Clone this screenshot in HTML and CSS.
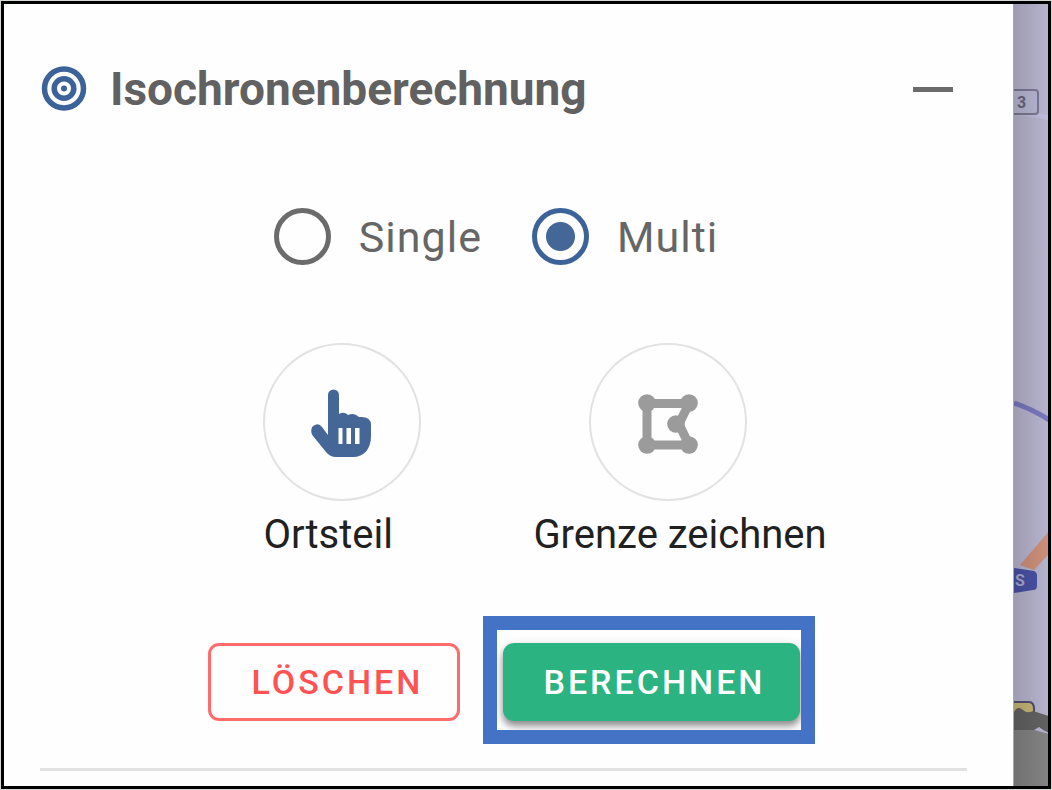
FILE: index.html
```html
<!DOCTYPE html>
<html lang="de">
<head>
<meta charset="utf-8">
<meta name="viewport" content="width=device-width, initial-scale=1">
<title>Isochronenberechnung</title>
<link rel="stylesheet" href="styles.css">
</head>
<body>
<div class="frame">
  <main class="panel">
    <header class="panel-header">
      <svg class="target-icon" viewBox="0 0 46 46" aria-hidden="true">
        <circle cx="23" cy="22.500" r="19.500" fill="none" stroke="#3b6299" stroke-width="5.500"/>
        <circle cx="23" cy="22.500" r="9.800" fill="none" stroke="#3b6299" stroke-width="5.500"/>
        <circle cx="23" cy="22.500" r="3" fill="#3b6299"/>
      </svg>
      <h1 class="panel-title">Isochronenberechnung</h1>
      <button class="collapse" type="button" aria-label="Minimieren"><span class="collapse-bar"></span></button>
    </header>

    <div class="modes" role="radiogroup" aria-label="Modus">
      <label class="mode"><input class="mode-input" type="radio" name="mode">Single</label>
      <label class="mode"><input class="mode-input" type="radio" name="mode" checked>Multi</label>
    </div>

    <div class="tools">
      <div class="tool">
        <button class="tool-button" type="button" aria-labelledby="tool-district">
          <svg class="hand-icon" viewBox="0 0 62 71" aria-hidden="true">
            <path fill="#446797" fill-rule="evenodd" d="M17 48V8a5.500 5.500 0 0 1 11 0V27Q33 24 37 28Q43 25 48 30Q60 29 60 38V49C60 62 53 70 42 70H25Q19 70 15 65L2 49C-1 45 0 39 4 38Q8 36 11 40ZM27.500 41V57H31.500V41ZM35.500 41V57H40V41ZM44 41V57H48.500V41Z"/>
          </svg>
        </button>
        <span class="tool-label" id="tool-district">Ortsteil</span>
      </div>
      <div class="tool tool-draw">
        <button class="tool-button" type="button" aria-labelledby="tool-border">
          <svg class="shape-icon" viewBox="0 0 60 64" aria-hidden="true">
            <g fill="none" stroke="#9b9b9b" stroke-width="9">
              <path d="M51 13.500H9V55H51L41 34Z"/>
            </g>
            <g fill="#9b9b9b">
              <circle cx="9" cy="13" r="8.800"/>
              <circle cx="51" cy="13" r="8.800"/>
              <circle cx="9" cy="55" r="8.800"/>
              <circle cx="51" cy="55" r="8.800"/>
              <circle cx="38" cy="34" r="8.800"/>
            </g>
          </svg>
        </button>
        <span class="tool-label" id="tool-border">Grenze zeichnen</span>
      </div>
    </div>

    <div class="actions">
      <button class="action action-clear" type="button">LÖSCHEN</button>
      <div class="highlight"><button class="action action-run" type="button">BERECHNEN</button></div>
    </div>
    <hr class="divider">
  </main>

  <aside class="map" aria-label="Karte">
    <svg class="map-drawing" viewBox="0 0 35 782" preserveAspectRatio="xMinYMin slice">
      <defs>
        <linearGradient id="shade"><stop offset="0" stop-color="#000" stop-opacity=".14"/><stop offset="1" stop-color="#000" stop-opacity="0"/></linearGradient>
      </defs>
      <rect width="35" height="782" fill="#b7b4ce"/>
      <path d="M0 109Q20 110 35 114" fill="none" stroke="#bebcdc" stroke-width="5"/>
      <rect x="-10" y="86" width="34" height="24" rx="3" fill="#b8b7d3" stroke="#7b7993" stroke-width="2"/>
      <text class="road-number" x="3" y="104" fill="#68667c">3</text>
      <path d="M0 399Q20 406 35 416" fill="none" stroke="#7a78bf" stroke-width="5"/>
      <path d="M6 561L35 527V550L20 566Z" fill="#cd907a"/>
      <path d="M0 564L20 567Q23 568 23 572V582Q23 586 19 586L0 589Z" fill="#4951a5"/>
      <text class="road-number" x="1" y="582" fill="#a6a9d4">S</text>
      <path d="M0 726H20L35 730V782H0Z" fill="#838383"/>
      <path d="M-4 698H15Q20 698 20 705V711H-4Z" fill="#c6b676" stroke="#53506f" stroke-width="2"/>
      <path d="M0 708Q4 701 9 706Q13 710 19 707L35 712V729Q30 727 25 723L20 726H0Z" fill="#626262"/>
      <rect width="35" height="782" fill="url(#shade)"/>
    </svg>
  </aside>
</div>
</body>
</html>
```
FILE: styles.css
```css
* { box-sizing: border-box; }

body {
  margin: 0;
  padding: 1px;
  min-height: 100vh;
  display: flex;
  background: #d5dad5;
  font-family: Roboto, "Liberation Sans", sans-serif;
  color: #212121;
}

button { font-family: inherit; cursor: pointer; }

.frame {
  flex: 1;
  display: flex;
  border: 3px solid #000;
  background: #fefefe;
}

.panel {
  flex: 1;
  min-width: 0;
  padding: 58px 46px 0 36px;
}

.panel-header {
  display: flex;
  align-items: center;
  gap: 23px;
  padding: 0 14px 0 1px;
}

.target-icon { width: 46px; height: 46px; flex: none; }

.panel-title {
  flex: 1;
  margin: 0;
  font-size: 46px;
  line-height: 54px;
  font-weight: 700;
  color: #616161;
}

.collapse {
  display: flex;
  align-items: center;
  height: 46px;
  padding: 0;
  border: 0;
  background: none;
}

.collapse-bar { width: 40px; height: 5px; background: #6b6b6b; }

.modes {
  display: flex;
  justify-content: center;
  gap: 50px;
  margin-top: 92px;
  padding-right: 15px;
}

.mode {
  display: flex;
  align-items: center;
  gap: 28px;
  font-size: 43px;
  line-height: 56px;
  letter-spacing: 1px;
  color: #666;
}

.mode-input {
  appearance: none;
  flex: none;
  width: 57px;
  height: 57px;
  margin: 0;
  border: 5px solid #6b6b6b;
  border-radius: 50%;
}

.mode-input:checked {
  border-color: #3b6299;
  background: radial-gradient(circle, #446797 14px, transparent 15px);
}

.tools {
  display: flex;
  justify-content: center;
  gap: 112px;
  margin-top: 78px;
  padding-left: 83px;
}

.tool {
  display: flex;
  flex-direction: column;
  gap: 10px;
}

.tool-draw { align-items: center; }
.tool-draw .tool-button { margin-right: 23px; }

.tool-button {
  display: flex;
  align-items: center;
  justify-content: center;
  width: 158px;
  height: 158px;
  padding: 0;
  border: 2px solid #e2e2e2;
  border-radius: 50%;
  background: none;
}

.hand-icon { width: 62px; height: 71px; }
.shape-icon { width: 60px; height: 64px; }

.tool-label { font-size: 40px; line-height: 48px; white-space: nowrap; }

.actions {
  display: flex;
  align-items: center;
  justify-content: center;
  gap: 23px;
  margin-top: 57px;
  padding-left: 16px;
}

.action {
  height: 78px;
  padding: 0 34px 0 40px;
  border-radius: 11px;
  font-size: 34px;
  line-height: 40px;
  font-weight: 500;
  letter-spacing: 3px;
}

.action-clear {
  margin-top: 4px;
  border: 3px solid #ff6b6b;
  background: none;
  color: #ff5252;
}

.action-run {
  display: block;
  border: 0;
  background: #2bb381;
  color: #fff;
  box-shadow: 0 5px 7px rgba(0, 0, 0, .4), 0 2px 12px rgba(0, 0, 0, .1);
}

.highlight {
  padding: 13px 1px 9px 6px;
  border: 14px solid #4472c4;
  overflow: hidden;
}

.divider {
  height: 3px;
  margin: 24px 0 0;
  border: 0;
  background: #e2e2e2;
}

.map {
  display: flex;
  width: 35px;
  border-left: 1px solid #a8a8a8;
  background: #838383;
}

.map-drawing { width: 100%; height: auto; }
.road-number { font-size: 16px; font-weight: 700; }
```
